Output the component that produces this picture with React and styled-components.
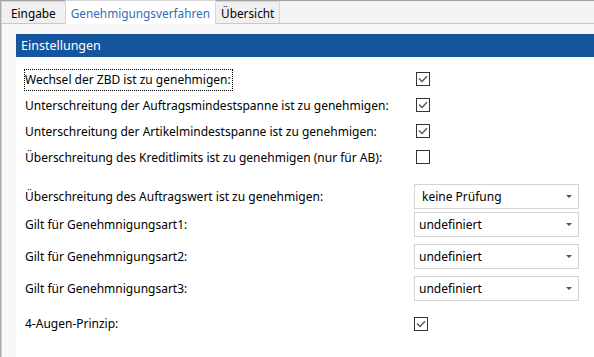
import styled, { createGlobalStyle } from "styled-components";

const Global = createGlobalStyle`
    html, body { margin: 0; padding: 0; background: #ffffff; }
    * { box-sizing: border-box; }
    body { font-family: "Segoe UI", "Noto Sans", "Open Sans", sans-serif; font-size: 12px; color: #1a1a1a; }
`

const Window = styled.div`
    width: 594px;
    height: 357px;
    display: flex;
    flex-direction: column;
    overflow: hidden;
    border-left: 1px solid #a8a8a8;
`

const TabBar = styled.div`
    height: 24px;
    display: flex;
    align-items: flex-end;
    background: #f3f3f3;
    border-top: 1px solid #a0a0a0;
    padding-left: 1px;
    position: relative;

    &::after{
        content: "";
        position: absolute;
        left: 0;
        right: 0;
        bottom: 0;
        height: 1px;
        background: #c8c8c8;
    }
`

const Tab = styled.div`
    height: 23px;
    display: flex;
    align-items: center;
    padding: 0 ${p => p.$pad}px;
    border: 1px solid #d6d6d6;
    border-bottom: none;
    margin-left: -1px;
    font-size: 11.8px;
    background: ${p => p.$active ? '#ffffff' : '#f0f0f0'};
    color: ${p => p.$active ? '#2f6db5' : '#000000'};
    position: relative;
    z-index: ${p => p.$active ? 1 : 0};
    ${p => p.$active && 'height: 24px;'}
`

const Body = styled.div`
    flex: 1;
    display: flex;
    flex-direction: column;
    background: #f8f8f8;
    padding: 10px 0 0 14px;
    border-left: 1px solid #d0d0d0;
`

const Header = styled.div`
    height: 23px;
    background: #14559d;
    color: #ffffff;
    display: flex;
    align-items: center;
    padding-left: 5px;
    font-size: 12.5px;
`

const Panel = styled.div`
    flex: 1;
    background: #ffffff;
    padding: 9px 0 0 9px;
`

const Group = styled.div`
    margin-top: ${p => p.$gap || 0}px;
`

const Row = styled.div`
    display: flex;
    align-items: center;
    height: ${p => p.$h}px;
    margin-top: ${p => p.$gap || 0}px;
`

const Label = styled.div`
    width: 389px;
    color: #000000;
    white-space: nowrap;

    span{
        padding: 1px 1px 2px 0;
        outline: ${p => p.$focus ? '1px dotted #000' : 'none'};
    }
`

const Box = styled.div`
    width: 14px;
    height: 14px;
    margin-left: ${p => p.$off || 0}px;
    border: 1px solid #333333;
    background: #ffffff;
    display: flex;
    align-items: center;
    justify-content: center;
`

const Select = styled.div`
    width: 165px;
    height: 25px;
    border: 1px solid #d4d4d4;
    background: #ffffff;
    display: flex;
    align-items: center;
    justify-content: space-between;
    padding: 0 6px 0 ${p => p.$pad}px;
    color: #000000;

    i{
        width: 0;
        height: 0;
        border-left: 3px solid transparent;
        border-right: 3px solid transparent;
        border-top: 3px solid #555555;
    }
`

function Check({ checked, off }) {
    return (
        <Box $off={off}>
            {checked && (
                <svg width="10" height="8" viewBox="0 0 10 8">
                    <path d="M1 3.5 L4 6.5 L9 1.2" fill="none" stroke="#555" strokeWidth="1.3" />
                </svg>
            )}
        </Box>
    )
}

const checks = [
    ["Wechsel der ZBD ist zu genehmigen:", true],
    ["Unterschreitung der Auftragsmindestspanne ist zu genehmigen:", true],
    ["Unterschreitung der Artikelmindestspanne ist zu genehmigen:", true],
    ["Überschreitung des Kreditlimits ist zu genehmigen (nur für AB):", false],
]

const selects = [
    ["Überschreitung des Auftragswert ist zu genehmigen:", "keine Prüfung", 0, 7],
    ["Gilt für Genehmnigungsart1:", "undefiniert", 3, 4],
    ["Gilt für Genehmnigungsart2:", "undefiniert", 7, 4],
    ["Gilt für Genehmnigungsart3:", "undefiniert", 7, 4],
]

export default function App() {
    return (
        <Window>
            <Global />
            <TabBar>
                <Tab $pad={9}>Eingabe</Tab>
                <Tab $pad={5} $active>Genehmigungsverfahren</Tab>
                <Tab $pad={5}>Übersicht</Tab>
            </TabBar>
            <Body>
                <Header>Einstellungen</Header>
                <Panel>
                    <Group>
                        {checks.map(([text, on], i) => (
                            <Row $h={26} key={text}>
                                <Label $focus={i === 0}><span>{text}</span></Label>
                                <Check checked={on} off={2} />
                            </Row>
                        ))}
                    </Group>
                    <Group $gap={14}>
                        {selects.map(([text, value, gap, pad]) => (
                            <Row $h={25} $gap={gap} key={text}>
                                <Label>{text}</Label>
                                <Select $pad={pad}>{value}<i /></Select>
                            </Row>
                        ))}
                        <Row $h={25} $gap={10}>
                            <Label>4-Augen-Prinzip:</Label>
                            <Check checked off={0} />
                        </Row>
                    </Group>
                </Panel>
            </Body>
        </Window>
    )
}
